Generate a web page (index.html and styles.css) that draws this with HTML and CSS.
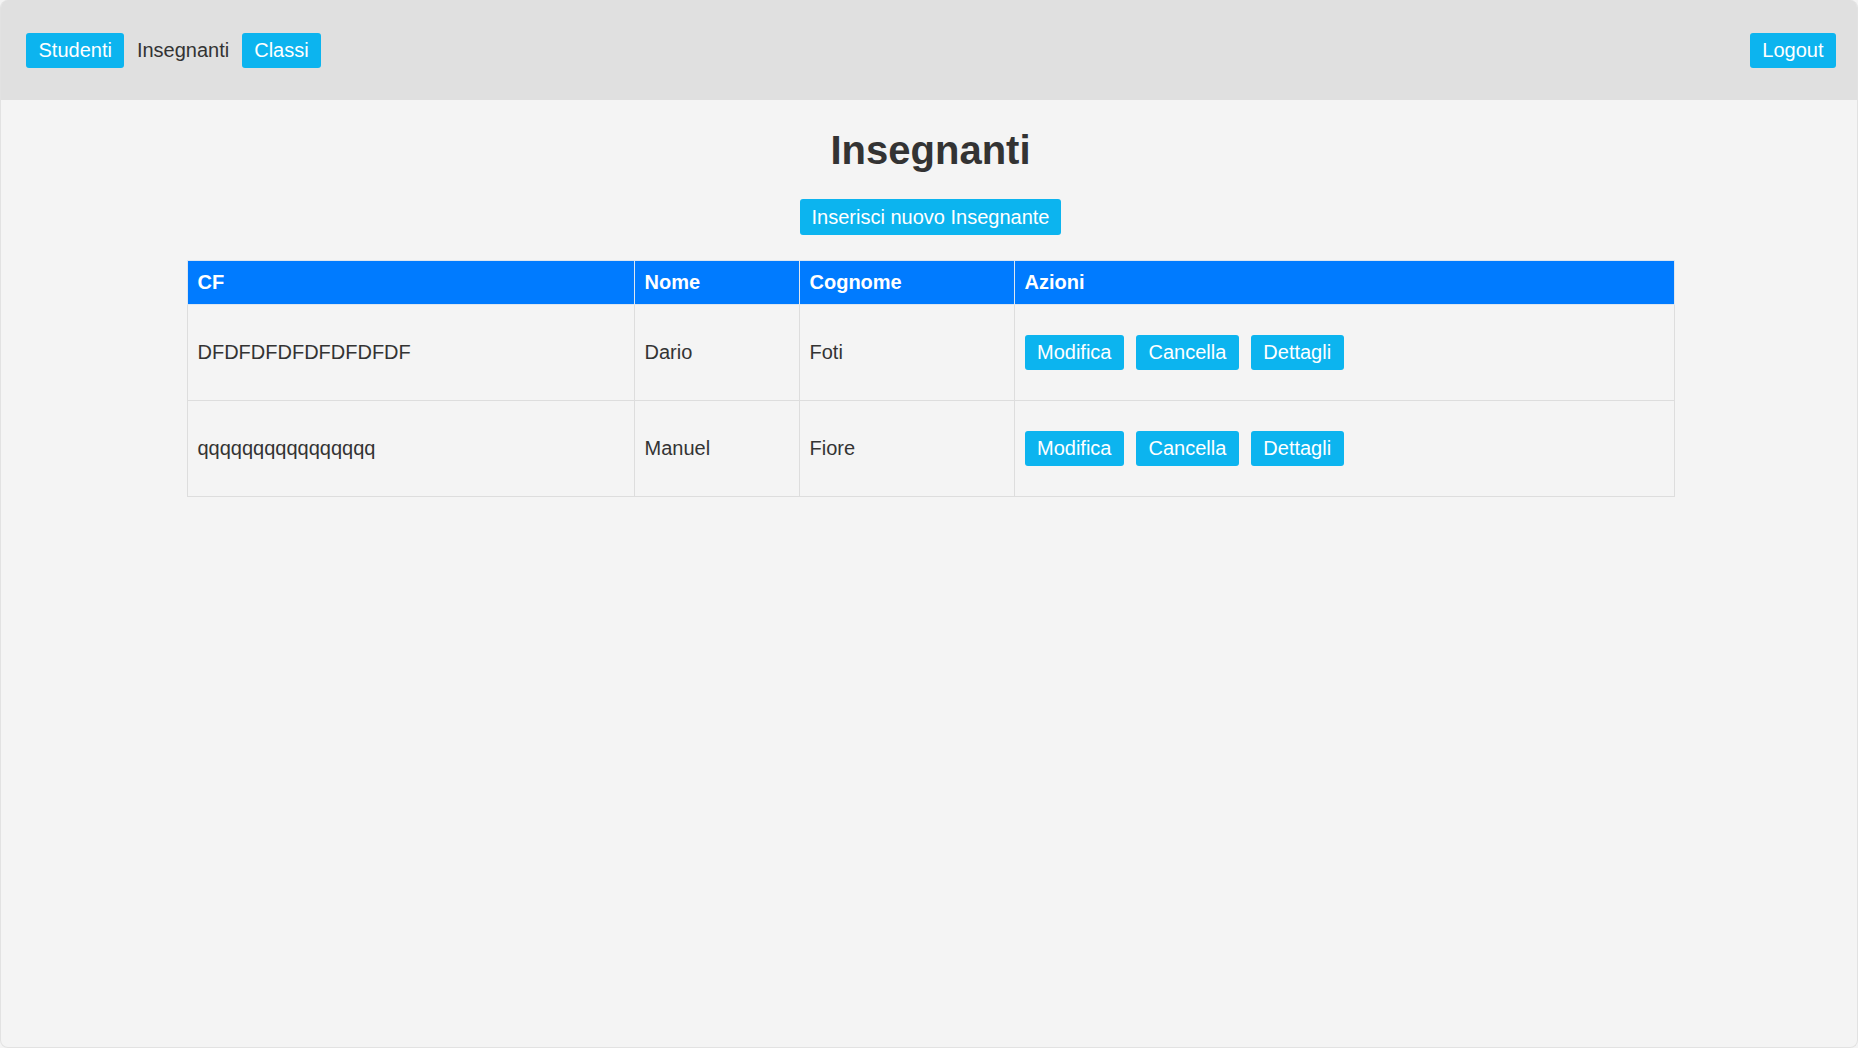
FILE: index.html
```html
<!DOCTYPE html>
<html lang="it">
<head>
<meta charset="utf-8">
<title>Insegnanti</title>
<link rel="stylesheet" href="styles.css">
</head>
<body>
<div class="window">
  <nav class="navbar">
    <div class="nav-left">
      <a class="btn" href="#">Studenti</a>
      <a class="nav-link" href="#">Insegnanti</a>
      <a class="btn" href="#">Classi</a>
    </div>
    <a class="btn" href="#">Logout</a>
  </nav>
  <main class="content">
    <h1 class="title">Insegnanti</h1>
    <div class="actions-top">
      <a class="btn" href="#">Inserisci nuovo Insegnante</a>
    </div>
    <table class="data">
      <colgroup>
        <col class="c-cf">
        <col class="c-nome">
        <col class="c-cognome">
        <col class="c-azioni">
      </colgroup>
      <thead>
        <tr><th>CF</th><th>Nome</th><th>Cognome</th><th>Azioni</th></tr>
      </thead>
      <tbody>
        <tr>
          <td>DFDFDFDFDFDFDFDF</td><td>Dario</td><td>Foti</td>
          <td><div class="row-actions"><a class="btn" href="#">Modifica</a><a class="btn" href="#">Cancella</a><a class="btn" href="#">Dettagli</a></div></td>
        </tr>
        <tr>
          <td>qqqqqqqqqqqqqqqq</td><td>Manuel</td><td>Fiore</td>
          <td><div class="row-actions"><a class="btn" href="#">Modifica</a><a class="btn" href="#">Cancella</a><a class="btn" href="#">Dettagli</a></div></td>
        </tr>
      </tbody>
    </table>
  </main>
</div>
</body>
</html>
```

FILE: styles.css
```css
* { box-sizing: border-box; }
html, body { margin: 0; padding: 0; height: 100%; }
body {
  font-family: "Liberation Sans", Arial, sans-serif;
  font-size: 20px;
  color: #333;
  background: #f4f4f4;
}
.window {
  height: 100vh;
  background: #f4f4f4;
  border: 1px solid #e2e2e2;
  border-top: none;
  border-radius: 8px;
  overflow: hidden;
}
.navbar {
  height: 100px;
  background: #e0e0e0;
  display: flex;
  align-items: center;
  justify-content: space-between;
  padding: 0 21px 0 25px;
}
.nav-left { display: flex; align-items: center; }
.btn {
  display: inline-block;
  background: #0cb4ef;
  color: #fff;
  text-decoration: none;
  padding: 6px 12.5px;
  line-height: 23px;
  border-radius: 3px;
  white-space: nowrap;
}
.nav-link {
  color: #333;
  text-decoration: none;
  padding: 6px 12.5px;
  line-height: 23px;
}
.content { padding: 1px 0 0 3px; }
.title {
  text-align: center;
  font-size: 40px;
  font-weight: bold;
  margin: 26px 0 26px;
  line-height: 46px;
}
.actions-top {
  display: flex;
  justify-content: center;
  margin-bottom: 25px;
}
.actions-top .btn { padding: 6px 11.5px; line-height: 24px; }
.data {
  width: 1488px;
  margin: 0 auto;
  border-collapse: collapse;
  table-layout: fixed;
}
.c-cf { width: 447px; }
.c-nome { width: 165px; }
.c-cognome { width: 215px; }
.data th {
  background: #007bff;
  color: #fff;
  text-align: left;
  font-weight: bold;
  padding: 10px 10px;
  line-height: 23px;
  border: 1px solid #dde6f0;
}
.data td {
  border: 1px solid #dddddd;
  padding: 10px 10px;
  height: 96px;
  vertical-align: middle;
  line-height: 23px;
}
.row-actions { display: flex; gap: 12px; }
```
